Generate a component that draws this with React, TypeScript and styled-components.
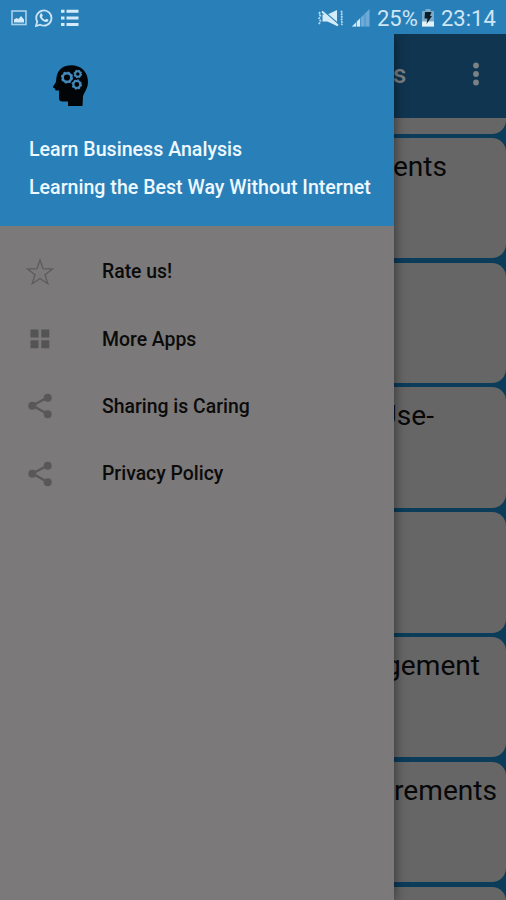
import React from 'react';
import styled, { createGlobalStyle } from 'styled-components';

const GlobalStyle = createGlobalStyle`
  * { box-sizing: border-box; }
  body { margin: 0; font-family: Roboto, "Liberation Sans", sans-serif; }
`;

const Screen = styled.div`
  width: 506px;
  height: 900px;
  display: flex;
  flex-direction: column;
  overflow: hidden;
  background: #2980b9;
`;

const StatusBar = styled.header`
  height: 34px;
  flex: none;
  display: flex;
  justify-content: space-between;
  padding: 0 11px;
  color: #cfe6f6;
`;

const StatusGroup = styled.div`
  display: flex;
  align-items: center;
  height: 36px;
`;

const StatusText = styled.span<{ $width: number }>`
  width: ${(p) => p.$width}px;
  font-size: 22px;
  line-height: 37px;
  white-space: nowrap;
`;

const Glyph = styled.svg<{ $gap?: number }>`
  display: block;
  flex: none;
  margin-right: ${(p) => p.$gap ?? 0}px;
`;

const Body = styled.div`
  flex: 1;
  min-height: 0;
  display: flex;
`;

const Drawer = styled.aside`
  width: 394px;
  flex: none;
  background: #7b7979;
  box-shadow: 0 2px 12px rgba(0, 0, 0, 0.55);
  z-index: 1;
  clip-path: inset(0 -16px 0 0);
`;

const DrawerHeader = styled.div`
  height: 192px;
  padding: 30px 0 0 29px;
  background: #2980b9;
  color: #eef8ff;
`;

const Logo = styled.svg`
  display: block;
  margin: 0 0 25px 22px;
`;

const HeaderLine = styled.div`
  height: 38px;
  line-height: 38px;
  font-size: 19.6px;
  font-weight: 500;
  white-space: nowrap;
`;

const Menu = styled.nav`
  padding-top: 12px;
`;

const MenuRow = styled.div`
  height: 67.4px;
  display: flex;
  align-items: center;
  padding-left: 25px;
  color: #0b0b0b;
  font-size: 19.4px;
  font-weight: 500;
`;

const MenuIcon = styled.svg`
  width: 30px;
  height: 30px;
  flex: none;
  margin-right: 47px;
`;

const Page = styled.main`
  flex: 1;
  min-width: 0;
  display: flex;
  flex-direction: column;
  overflow: hidden;
  background: #0b3c5a;
`;

const AppBar = styled.div`
  height: 83.5px;
  flex: none;
  display: flex;
  align-items: center;
  justify-content: space-between;
  padding: 0 24px 4px 0;
  background: #103550;
  color: #7c8185;
`;

const BarTitle = styled.div`
  font-size: 26px;
  font-weight: 500;
  margin-left: -1px;
`;

const CardList = styled.div`
  display: flex;
  flex-direction: column;
  gap: 4.4px;
`;

const Card = styled.div<{ $first?: boolean; $inset?: number }>`
  height: ${(p) => (p.$first ? 16 : 120.4)}px;
  flex: none;
  display: flex;
  justify-content: flex-end;
  padding: 11px ${(p) => p.$inset ?? 0}px 0 0;
  border-radius: ${(p) => (p.$first ? '0 0 14px 0' : '0 14px 14px 0')};
  background: #666;
  color: #080808;
  font-size: 28.1px;
  line-height: 36px;
  white-space: nowrap;
`;

const cards = [
  { text: 'ents', inset: 59 },
  { text: '', inset: 0 },
  { text: 'Use-', inset: 72 },
  { text: '', inset: 0 },
  { text: 'gement', inset: 26 },
  { text: 'rements', inset: 9 },
  { text: '', inset: 0 },
];

const Gear = ({ x, y, r, w }: { x: number; y: number; r: number; w: number }) => (
  <g fill="none" stroke="#4389bb">
    <circle cx={x} cy={y} r={r} strokeWidth={w} />
    <circle cx={x} cy={y} r={r + w / 2} strokeWidth="1.3" strokeDasharray={`${((r + w / 2) * Math.PI) / 8}`} />
  </g>
);

const ShareIcon = () => (
  <MenuIcon viewBox="0 0 30 30">
    <path d="M22.500 6.500 7.500 14.500l15 8.500" fill="none" stroke="#595858" strokeWidth="2.400" />
    <g fill="#595858">
      <circle cx="22.700" cy="6.700" r="4" />
      <circle cx="7.300" cy="14.700" r="4" />
      <circle cx="22.700" cy="23.300" r="4" />
    </g>
  </MenuIcon>
);

export default function App() {
  return (
    <>
      <GlobalStyle />
      <Screen>
        <StatusBar>
          <StatusGroup>
            <Glyph width="16" height="16" viewBox="0 0 16 16" $gap={8}>
              <rect x="1" y="1" width="14" height="13.500" fill="none" stroke="#a9d0ea" strokeWidth="1.600" />
              <path d="M3 12.500V9.500l2.500-1.500 2 1 2.500-3 3 3.500v3z" fill="#d4ebf9" />
            </Glyph>
            <Glyph width="18" height="18" viewBox="0 0 18 18" $gap={8}>
              <path d="M1 17l1.200-4.300A7.600 7.600 0 1 1 5.200 15.700z" fill="none" stroke="#cbe4f5" strokeWidth="1.800" />
              <path d="M5.200 5.200c.8-1.300 1.700-1.200 2 0l.6 1.500-.9 1.200c.8 1.500 1.800 2.400 3.200 3l1.100-1.200 2.300 1.100c-.2 2-1.800 2.600-3.700 2C7 11.700 4.800 9.200 4.600 7z" fill="#d4ebf9" />
            </Glyph>
            <Glyph width="18" height="18" viewBox="0 0 18 18">
              <path d="M0 2.200h3.500M5.500 2.200H17.500M0 9h3.500M5.500 9H17.500M0 15.500h3.500M5.500 15.500H17.500" stroke="#d4ebf9" strokeWidth="3" />
            </Glyph>
          </StatusGroup>
          <StatusGroup>
            <Glyph width="26" height="18" viewBox="0 0 26 18" $gap={8}>
              <path d="M4.500 5.500h5l9.500-4.500v16L9.500 12.500h-5z" fill="#d4ebf9" />
              <path d="M5 1.500l16 14" stroke="#2980b9" strokeWidth="1.500" />
              <path d="M4 2.500l16 14" stroke="#d4ebf9" strokeWidth="1.800" />
              <path d="M2 3l-1 2 1.500 2L1 9.500 2.500 12 1 15M23 2l1.500 2L23 6.500 24.500 9 23 11.500l1.500 2.500-1 2" fill="none" stroke="#b9daef" strokeWidth="1.700" strokeDasharray="2 1" />
            </Glyph>
            <Glyph width="18" height="18" viewBox="0 0 18 18" $gap={7}>
              <path d="M0 17.500L17.500 0v17.500z" fill="#6dabd6" />
              <path d="M0 17.500L8 9.500v8z" fill="#d4ebf9" />
              <path d="M4.500 11v7M8.500 8v10M13 5v13" stroke="#3d8dc4" strokeWidth=".8" />
            </Glyph>
            <StatusText $width={45}>25%</StatusText>
            <Glyph width="12" height="18" viewBox="0 0 12 18" $gap={7}>
              <path d="M3.500 0h5v2H12v15.500H0V2h3.500z" fill="#7cabc9" />
              <path d="M0 12.500h12v5H0z" fill="#e2f2fb" />
              <path d="M3 3h6.500L8 7h2l-5.500 8 1-5.500H2.500z" fill="#091c28" />
            </Glyph>
            <StatusText $width={54}>23:14</StatusText>
          </StatusGroup>
        </StatusBar>
        <Body>
          <Drawer>
            <DrawerHeader>
              <Logo width="40" height="42" viewBox="0 0 40 42">
                <path d="M5.500 13C7 5 13 1.300 20 1.300c10 0 17 6.500 17 16.500 0 6.500-3.500 10-5 14.500L31.500 42H17v-4.500h-4.500c-3 .3-4.500-.5-4.500-3.500v-7.500H5c-.8-.2-1-1-.7-1.700L2 23.500c-.5-.5 2.500-4.200 3-6z" fill="#020507" />
                <Gear x={16} y={13.500} r={4.300} w={2.400} />
                <Gear x={26.800} y={10} r={2.700} w={1.900} />
                <Gear x={25.800} y={20.500} r={3.500} w={2.200} />
              </Logo>
              <HeaderLine>Learn Business Analysis</HeaderLine>
              <HeaderLine>Learning the Best Way Without Internet</HeaderLine>
            </DrawerHeader>
            <Menu>
              <MenuRow>
                <MenuIcon viewBox="0 0 30 30">
                  <path d="M15 3l3 8.700 9.500.3-7.500 5.700 2.800 9L15 21.500 7.200 26.700l2.800-9L2.500 12l9.500-.3z" fill="none" stroke="#5d5c5c" strokeWidth="1.300" />
                </MenuIcon>
                Rate us!
              </MenuRow>
              <MenuRow>
                <MenuIcon viewBox="0 0 30 30">
                  <path d="M5.500 5.500h8v8h-8zM16.300 5.500h8v8h-8zM5.500 16.300h8v8h-8zM16.300 16.300h8v8h-8z" fill="#555454" />
                </MenuIcon>
                More Apps
              </MenuRow>
              <MenuRow>
                <ShareIcon />
                Sharing is Caring
              </MenuRow>
              <MenuRow>
                <ShareIcon />
                Privacy Policy
              </MenuRow>
            </Menu>
          </Drawer>
          <Page>
            <AppBar>
              <BarTitle>s</BarTitle>
              <svg width="12" height="26" viewBox="0 0 12 26" fill="#7c8185">
                <circle cx="6" cy="4.500" r="2.900" />
                <circle cx="6" cy="13" r="2.900" />
                <circle cx="6" cy="21.500" r="2.900" />
              </svg>
            </AppBar>
            <CardList>
              <Card $first />
              {cards.map((card, i) => (
                <Card key={i} $inset={card.inset}>{card.text}</Card>
              ))}
            </CardList>
          </Page>
        </Body>
      </Screen>
    </>
  );
}
